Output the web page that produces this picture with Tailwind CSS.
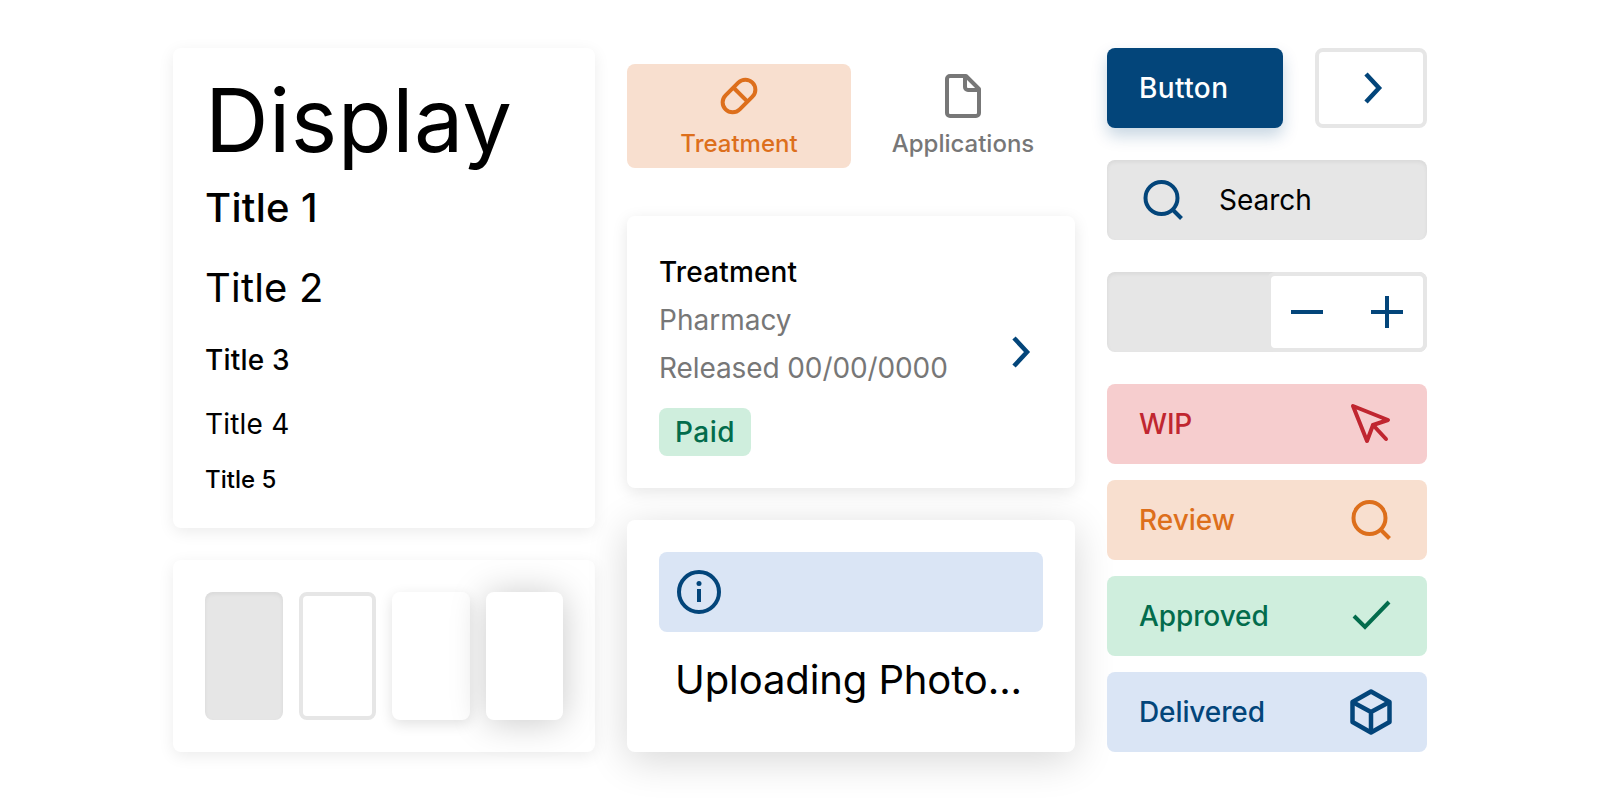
<!DOCTYPE html>
<html lang="en">
  <head>
    <meta charset="UTF-8" />
    <meta name="viewport" content="width=device-width, initial-scale=1.0" />
    <title>UI Kit</title>
    <script src="https://cdn.jsdelivr.net/npm/@tailwindcss/browser@4"></script>
  </head>
  <body class="bg-white font-['Inter',sans-serif] text-black">
    <main class="flex justify-center gap-8 pt-12 h-[800px] overflow-hidden">
      <!-- typography + elevation -->
      <section class="w-[422px] flex flex-col gap-8">
        <div class="h-[480px] rounded-lg bg-white shadow-[0_4px_16px_rgba(0,0,0,0.08)] px-8 pt-6 flex flex-col">
          <h1 class="text-[88px] leading-[96px] tracking-[0.5px]">Display</h1>
          <h2 class="text-[40px] leading-[48px] font-[450] tracking-[0.3px] mt-4">Title 1</h2>
          <h2 class="text-[40px] leading-[48px] tracking-[0.2px] mt-8">Title 2</h2>
          <h3 class="text-[28px] leading-[32px] font-[450] tracking-[0.2px] mt-8">Title 3</h3>
          <h3 class="text-[28px] leading-[32px] tracking-[0.2px] mt-8">Title 4</h3>
          <h4 class="text-2xl leading-[32px] font-[450] mt-6">Title 5</h4>
        </div>
        <div class="h-[192px] rounded-lg bg-white shadow-[0_4px_16px_rgba(0,0,0,0.08)] p-8 grid grid-cols-4 gap-4">
          <div class="rounded-lg bg-[#e6e6e6] shadow-[inset_0_2px_4px_rgba(0,0,0,0.06)]"></div>
          <div class="rounded-lg bg-white border-4 border-[#e6e6e6]"></div>
          <div class="rounded-lg bg-white shadow-[0_4px_14px_rgba(0,0,0,0.12)]"></div>
          <div class="rounded-lg bg-white shadow-[0_2px_36px_rgba(0,0,0,0.22)]"></div>
        </div>
      </section>

      <!-- tabs + cards -->
      <section class="w-[448px] flex flex-col">
        <div class="flex mt-4">
          <div class="flex-1 h-[104px] rounded-lg bg-[#f8dfcf] p-2 flex flex-col items-center gap-2 text-[#dd6f1c]">
            <svg class="w-12 h-12" viewBox="0 0 48 48" fill="none" stroke="currentColor" stroke-width="4">
              <g transform="rotate(-45 24 24)">
                <rect x="5" y="14" width="38" height="20" rx="10" />
                <path d="M26 14v20" />
              </g>
            </svg>
            <span class="text-2xl leading-8 font-[450]">Treatment</span>
          </div>
          <div class="flex-1 h-[104px] p-2 flex flex-col items-center gap-2 text-[#777777]">
            <svg class="w-12 h-12" viewBox="0 0 48 48" fill="none" stroke="currentColor" stroke-width="4" stroke-linejoin="round">
              <path d="M11 4H27L40 17V41a3 3 0 0 1-3 3H11a3 3 0 0 1-3-3V7a3 3 0 0 1 3-3Z" />
              <path d="M26 4V15a3 3 0 0 0 3 3H40" />
            </svg>
            <span class="text-2xl leading-8 font-[450]">Applications</span>
          </div>
        </div>

        <div class="mt-12 h-[272px] rounded-lg bg-white shadow-[0_4px_16px_rgba(0,0,0,0.1)] p-8 flex items-center justify-between">
          <div>
            <div class="text-[28px] leading-[48px] font-[450] tracking-[0.15px]">Treatment</div>
            <div class="text-[28px] leading-[48px] text-[#777777]">Pharmacy</div>
            <div class="text-[28px] leading-[48px] text-[#777777] tracking-[-0.1px]">Released 00/00/0000</div>
            <span class="inline-block mt-4 h-12 rounded-lg bg-[#cfeedd] px-4 text-[28px] leading-[48px] font-[450] tracking-[0.5px] text-[#036c4c]">Paid</span>
          </div>
          <svg class="w-12 h-12 text-[#03457a]" viewBox="0 0 48 48" fill="none" stroke="currentColor" stroke-width="4.5">
            <path d="M19 10l13 14-13 14" />
          </svg>
        </div>

        <div class="mt-8 h-[232px] rounded-lg bg-white shadow-[0_8px_40px_rgba(0,0,0,0.16)] p-8">
          <div class="h-20 rounded-lg bg-[#dae5f5] pl-4 flex items-center text-[#03457a]">
            <svg class="w-12 h-12" viewBox="0 0 48 48" fill="none" stroke="currentColor" stroke-width="4">
              <circle cx="24" cy="24" r="20" />
              <path d="M24 21v13" />
              <circle cx="24" cy="15.5" r="2.5" fill="currentColor" stroke="none" />
            </svg>
          </div>
          <div class="mt-6 pl-4 text-[40px] leading-[48px] tracking-[-0.1px]">Uploading Photo...</div>
        </div>
      </section>

      <!-- buttons + status rows -->
      <section class="w-[320px] flex flex-col">
        <div class="flex justify-between">
          <button class="w-[176px] h-20 rounded-lg bg-[#03457a] px-8 text-left text-[28px] leading-8 font-[450] tracking-[0.4px] text-white shadow-[0_8px_16px_rgba(3,69,122,0.22)]">Button</button>
          <button class="w-[112px] h-20 rounded-lg bg-white border-4 border-[#e6e6e6] flex items-center justify-center text-[#03457a]">
            <svg class="w-12 h-12" viewBox="0 0 48 48" fill="none" stroke="currentColor" stroke-width="4.5">
              <path d="M19 10l13 14-13 14" />
            </svg>
          </button>
        </div>

        <div class="mt-8 h-20 rounded-lg bg-[#e6e6e6] shadow-[inset_0_2px_4px_rgba(0,0,0,0.06)] pl-8 flex items-center gap-8">
          <svg class="w-12 h-12 text-[#03457a]" viewBox="0 0 48 48" fill="none" stroke="currentColor" stroke-width="4">
            <circle cx="22.5" cy="22" r="16" />
            <path d="M34 34l8.5 8.5" />
          </svg>
          <span class="text-[28px] leading-8">Search</span>
        </div>

        <div class="mt-8 h-20 rounded-lg bg-[#e6e6e6] shadow-[inset_0_2px_4px_rgba(0,0,0,0.06)] flex justify-end">
          <div class="w-[160px] rounded-lg bg-white border-4 border-[#e6e6e6] flex items-center justify-center gap-8 text-[#03457a]">
            <svg class="w-12 h-12" viewBox="0 0 48 48" fill="none" stroke="currentColor" stroke-width="4">
              <path d="M8 24h32" />
            </svg>
            <svg class="w-12 h-12" viewBox="0 0 48 48" fill="none" stroke="currentColor" stroke-width="4">
              <path d="M8 24h32M24 8v32" />
            </svg>
          </div>
        </div>

        <div class="mt-8 flex flex-col gap-4">
          <div class="h-20 rounded-lg bg-[#f6cdce] px-8 flex items-center justify-between text-[#c02630]">
            <span class="text-[28px] leading-8 font-[450] tracking-[-0.2px]">WIP</span>
            <svg class="w-12 h-12" viewBox="0 0 48 48" fill="none" stroke="currentColor" stroke-width="4" stroke-linejoin="round" stroke-linecap="round">
              <path d="M6 6L20 41L26 25L41 20Z" />
              <path d="M26 25L39 39" />
            </svg>
          </div>
          <div class="h-20 rounded-lg bg-[#f8dfcf] px-8 flex items-center justify-between text-[#dd6f1c]">
            <span class="text-[28px] leading-8 font-[450]">Review</span>
            <svg class="w-12 h-12" viewBox="0 0 48 48" fill="none" stroke="currentColor" stroke-width="4">
              <circle cx="22.5" cy="22" r="16" />
              <path d="M34 34l8.5 8.5" />
            </svg>
          </div>
          <div class="h-20 rounded-lg bg-[#cfeedd] px-8 flex items-center justify-between text-[#036c4c]">
            <span class="text-[28px] leading-8 font-[450] tracking-[-0.1px]">Approved</span>
            <svg class="w-12 h-12" viewBox="0 0 48 48" fill="none" stroke="currentColor" stroke-width="4">
              <path d="M7 24L18 35L42 10" />
            </svg>
          </div>
          <div class="h-20 rounded-lg bg-[#dae5f5] px-8 flex items-center justify-between text-[#03457a]">
            <span class="text-[28px] leading-8 font-[450] tracking-[-0.1px]">Delivered</span>
            <svg class="w-12 h-12" viewBox="0 0 48 48" fill="none" stroke="currentColor" stroke-width="4.5" stroke-linejoin="round">
              <path d="M24 3.5L42.5 14V34L24 44.5L5.5 34V14Z" />
              <path d="M5.5 14L24 24L42.5 14M24 24V44.5" />
            </svg>
          </div>
        </div>
      </section>
    </main>
  </body>
</html>
